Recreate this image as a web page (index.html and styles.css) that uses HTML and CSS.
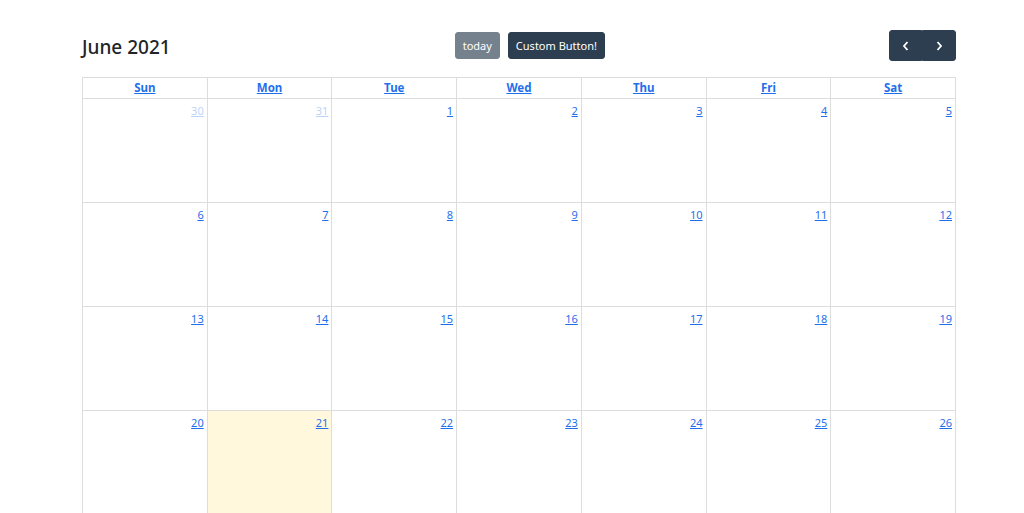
FILE: index.html
```html
<!DOCTYPE html>
<html lang="en">
<head>
<meta charset="utf-8">
<title>June 2021</title>
<link rel="stylesheet" href="styles.css">
</head>
<body>
<div class="page">
  <div class="toolbar">
    <h2 class="title">June 2021</h2>
    <div class="chunk">
      <button class="btn btn-today" disabled>today</button>
      <button class="btn">Custom Button!</button>
    </div>
    <div class="btn-group">
      <button class="btn btn-nav" aria-label="prev"><svg width="10" height="12" viewBox="0 0 10 12"><path d="M6.5 2 L3 6 L6.5 10" fill="none" stroke="#fff" stroke-width="1.8"/></svg></button>
      <button class="btn btn-nav" aria-label="next"><svg width="10" height="12" viewBox="0 0 10 12"><path d="M3.5 2 L7 6 L3.5 10" fill="none" stroke="#fff" stroke-width="1.8"/></svg></button>
    </div>
  </div>
  <div class="grid">
    <div class="hd"><a>Sun</a></div>
    <div class="hd"><a>Mon</a></div>
    <div class="hd"><a>Tue</a></div>
    <div class="hd"><a>Wed</a></div>
    <div class="hd"><a>Thu</a></div>
    <div class="hd"><a>Fri</a></div>
    <div class="hd"><a>Sat</a></div>

    <div class="day other"><a>30</a></div>
    <div class="day other"><a>31</a></div>
    <div class="day"><a>1</a></div>
    <div class="day"><a>2</a></div>
    <div class="day"><a>3</a></div>
    <div class="day"><a>4</a></div>
    <div class="day"><a>5</a></div>

    <div class="day"><a>6</a></div>
    <div class="day"><a>7</a></div>
    <div class="day"><a>8</a></div>
    <div class="day"><a>9</a></div>
    <div class="day"><a>10</a></div>
    <div class="day"><a>11</a></div>
    <div class="day"><a>12</a></div>

    <div class="day"><a>13</a></div>
    <div class="day"><a>14</a></div>
    <div class="day"><a>15</a></div>
    <div class="day"><a>16</a></div>
    <div class="day"><a>17</a></div>
    <div class="day"><a>18</a></div>
    <div class="day"><a>19</a></div>

    <div class="day"><a>20</a></div>
    <div class="day today"><a>21</a></div>
    <div class="day"><a>22</a></div>
    <div class="day"><a>23</a></div>
    <div class="day"><a>24</a></div>
    <div class="day"><a>25</a></div>
    <div class="day"><a>26</a></div>
  </div>
</div>
</body>
</html>
```

FILE: styles.css
```css
html, body {
  margin: 0;
  padding: 0;
  overflow: hidden;
  background: #fff;
}
body {
  font-family: "Noto Sans", "Open Sans", sans-serif;
  color: #212529;
}
.page {
  padding: 30px 68px 0 82px;
}
.toolbar {
  display: flex;
  justify-content: space-between;
  align-items: center;
  height: 31px;
  margin-bottom: 16px;
}
.title {
  margin: 3px 0 0;
  font-size: 19px;
  font-weight: 500;
  color: #212529;
  line-height: 1;
}
.chunk {
  display: flex;
  gap: 8px;
}
.btn {
  font-family: inherit;
  font-size: 11px;
  line-height: 1;
  color: #fff;
  background: #2c3e50;
  border: 1px solid #2c3e50;
  border-radius: 3px;
  height: 27px;
  padding: 0 7px;
  display: flex;
  align-items: center;
  justify-content: center;
}
.btn-today {
  opacity: 0.65;
}
.btn-group {
  display: flex;
}
.btn-nav {
  width: 33.5px;
  height: 31px;
  padding: 0;
  border-radius: 0;
}
.btn-nav:first-child {
  border-radius: 3px 0 0 3px;
}
.btn-nav:last-child {
  border-radius: 0 3px 3px 0;
}
.grid {
  display: grid;
  grid-template-columns: repeat(7, 1fr);
  grid-auto-rows: 104px;
  grid-template-rows: 21px;
  border-top: 1px solid #ddd;
  border-left: 1px solid #ddd;
}
.hd, .day {
  border-right: 1px solid #ddd;
  border-bottom: 1px solid #ddd;
}
.hd {
  text-align: center;
  font-size: 11.5px;
  font-weight: 700;
  line-height: 20px;
}
a {
  color: #1f6feb;
  text-decoration: underline;
  cursor: pointer;
}
.day {
  display: flex;
  justify-content: flex-end;
  align-items: flex-start;
  font-size: 11px;
}
.day a {
  padding: 4px 3px 0 0;
  line-height: 15px;
}
.day.other a {
  opacity: 0.3;
}
.day.today {
  background: #fff8dc;
}
```
